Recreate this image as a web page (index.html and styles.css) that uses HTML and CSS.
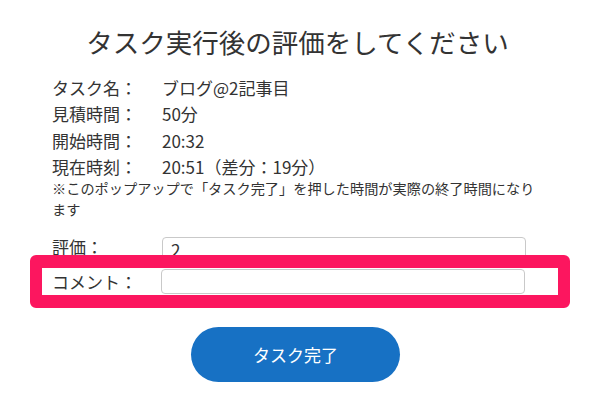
FILE: index.html
```html
<!DOCTYPE html>
<html lang="ja">
<head>
<meta charset="utf-8">
<title>タスク実行後の評価</title>
<link rel="stylesheet" href="styles.css">
</head>
<body>
<main class="dialog">
  <h1 class="title">タスク実行後の評価をしてください</h1>
  <dl class="info">
    <div class="info-row"><dt class="info-label">タスク名：</dt><dd class="info-value">ブログ@2記事目</dd></div>
    <div class="info-row"><dt class="info-label">見積時間：</dt><dd class="info-value">50分</dd></div>
    <div class="info-row"><dt class="info-label">開始時間：</dt><dd class="info-value">20:32</dd></div>
    <div class="info-row"><dt class="info-label">現在時刻：</dt><dd class="info-value">20:51（差分：19分）</dd></div>
  </dl>
  <p class="note">※このポップアップで「タスク完了」を押した時間が実際の終了時間になります</p>
  <div class="field">
    <label class="field-label" for="rating">評価：</label>
    <input class="field-input" id="rating" type="text" value="2">
  </div>
  <div class="field field--highlight">
    <label class="field-label" for="comment">コメント：</label>
    <input class="field-input" id="comment" type="text" value="">
  </div>
  <div class="actions">
    <button class="complete-btn" type="button">タスク完了</button>
  </div>
</main>
</body>
</html>
```

FILE: styles.css
```css
html, body {
  margin: 0;
  background: #ffffff;
}

body {
  font-family: "Noto Sans CJK JP", "Noto Sans", sans-serif;
  color: #333333;
}

.dialog {
  padding: 24px 60px 0 52px;
}

.title {
  margin: 0 -56px 15px -52px;
  font-size: 26.5px;
  font-weight: 400;
  line-height: 36px;
  text-align: center;
  color: #333333;
}

.info {
  margin: 0;
}

.info-row {
  display: flex;
  font-size: 17px;
  line-height: 26.4px;
}

.info-label {
  width: 110px;
  flex: none;
}

.info-value {
  margin: 0;
}

.note {
  margin: -3px 0 0;
  font-size: 14.2px;
  line-height: 21px;
}

.field {
  display: flex;
  align-items: flex-start;
  margin-top: 17px;
}

.field-label {
  width: 110px;
  flex: none;
  font-size: 17px;
  line-height: 20px;
}

.field-input {
  box-sizing: border-box;
  width: 364px;
  height: 26px;
  margin: 0;
  padding: 0 8px;
  border: 1px solid #c9c9c9;
  border-radius: 4px;
  background: #ffffff;
  font-family: "Noto Sans CJK JP", "Noto Sans", sans-serif;
  font-size: 17px;
  color: #333333;
  outline: none;
}

.field--highlight {
  position: relative;
  align-items: center;
  margin: -8px -31px 0 -22px;
  height: 27px;
  padding-left: 10px;
  border: 12px solid #fc165f;
  border-top-width: 13px;
  border-bottom-width: 13px;
  border-radius: 6px;
  background: #ffffff;
}

.field--highlight .field-label {
  line-height: 27px;
  width: 109px;
}

.field--highlight .field-input {
  height: 25px;
}

.actions {
  display: flex;
  justify-content: center;
  margin-top: 19px;
}

.complete-btn {
  width: 209px;
  height: 55px;
  border: none;
  border-radius: 28px;
  background: #1771c4;
  color: #ffffff;
  font-family: "Noto Sans CJK JP", "Noto Sans", sans-serif;
  font-size: 17px;
  cursor: pointer;
}
```
